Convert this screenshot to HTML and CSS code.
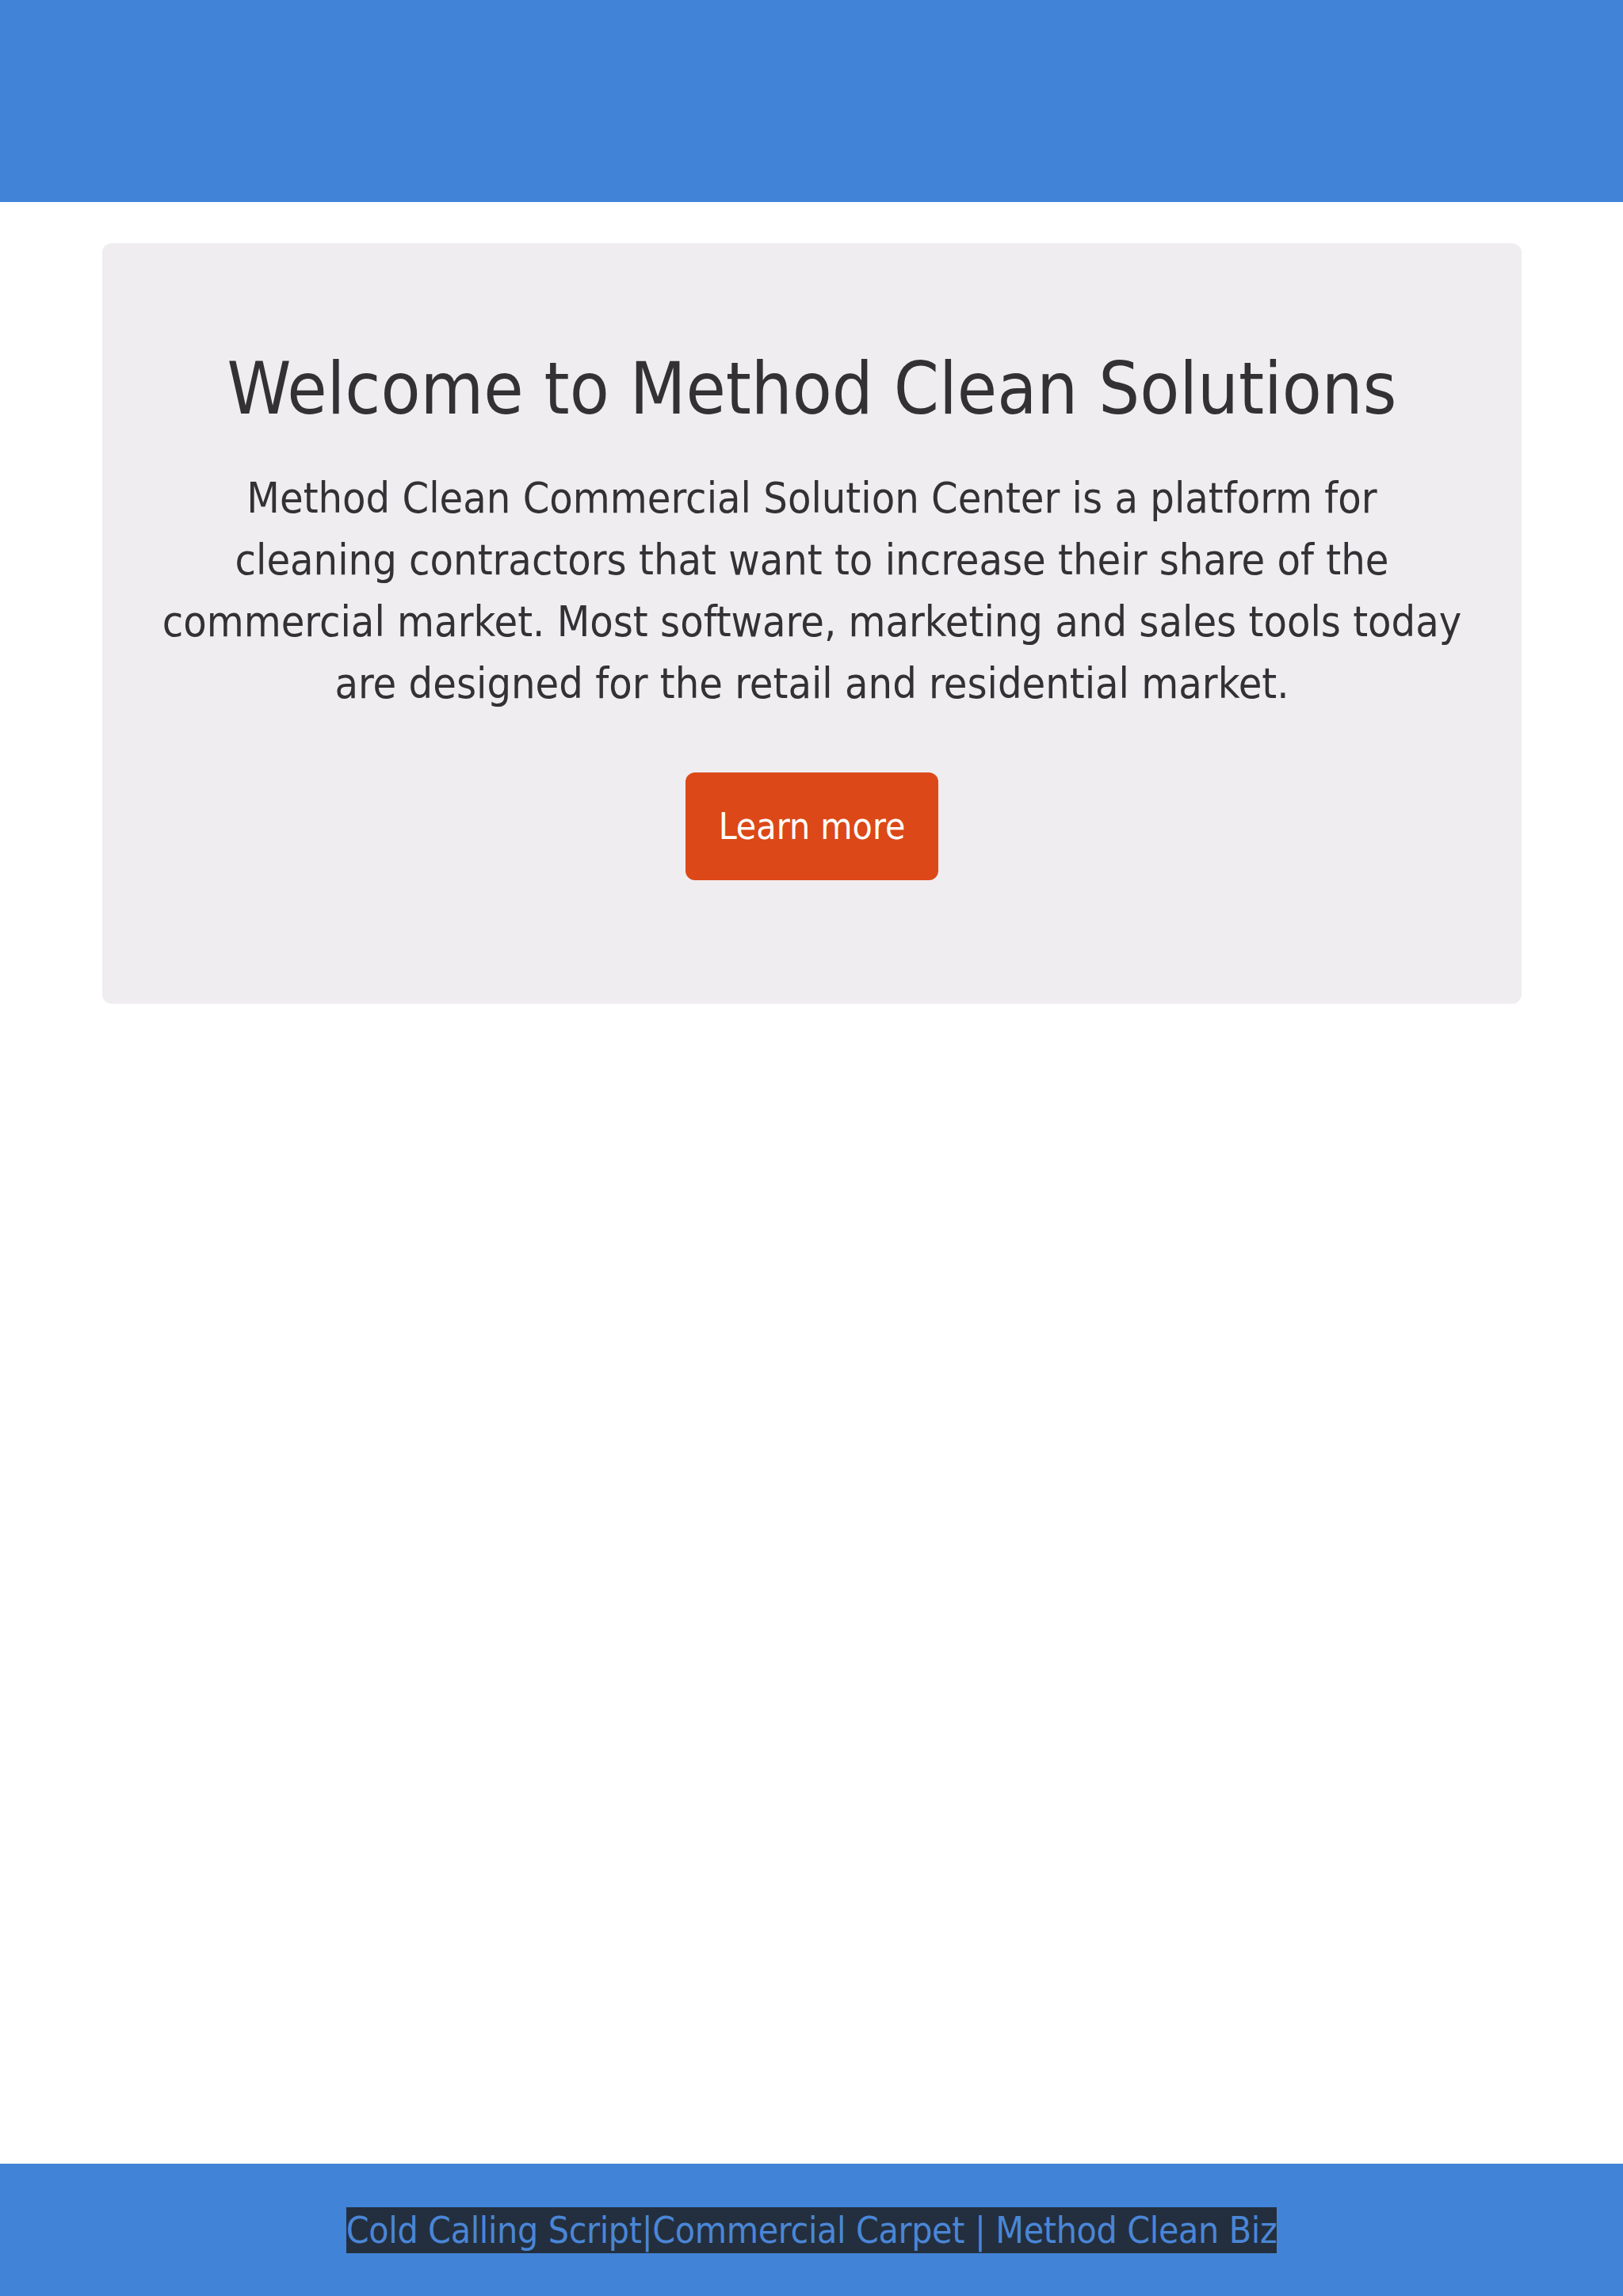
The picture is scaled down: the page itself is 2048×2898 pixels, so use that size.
FILE: index.html
```html
<!DOCTYPE html>
<html lang="en">
<head>
<meta charset="utf-8">
<title>Method Clean Solutions</title>
<link rel="stylesheet" href="styles.css">
</head>
<body>
<div class="page">
  <header class="topbar"></header>
  <main class="main">
    <section class="hero">
      <h1 class="hero-title">Welcome to Method Clean Solutions</h1>
      <p class="hero-text">Method Clean Commercial Solution Center is a platform for cleaning contractors that want to increase their share of the commercial market. Most software, marketing and sales tools today are designed for the retail and residential market.</p>
      <a class="btn" href="#">Learn more</a>
    </section>
  </main>
  <footer class="footer">
    <a class="footer-link" href="#">Cold Calling Script|Commercial Carpet | Method Clean Biz</a>
  </footer>
</div>
</body>
</html>
```

FILE: styles.css
```css
html, body {
  margin: 0;
  padding: 0;
}
body {
  font-family: "DejaVu Sans Condensed", "DejaVu Sans", sans-serif;
  color: #333134;
  background: #ffffff;
}
.page {
  min-height: 100vh;
  display: flex;
  flex-direction: column;
}
.topbar {
  height: 255px;
  background: #4183d7;
}
.main {
  flex: 1;
  padding: 52px 128px 0 129px;
}
.hero {
  background: #efedf0;
  border-radius: 12px;
  height: 960px;
  box-sizing: border-box;
  padding-top: 129px;
  text-align: center;
}
.hero-title {
  margin: 0;
  font-size: 91px;
  line-height: 110px;
  font-weight: normal;
}
.hero-text {
  margin: 44px auto 0;
  max-width: 1642px;
  font-size: 53.6px;
  line-height: 78px;
}
.btn {
  display: inline-block;
  margin-top: 73px;
  padding: 0 42px;
  height: 136px;
  line-height: 136px;
  background: #dc4817;
  color: #ffffff;
  font-size: 46px;
  border-radius: 12px;
  text-decoration: none;
}
.footer {
  height: 167px;
  background: #4183d7;
  display: flex;
  align-items: center;
  justify-content: center;
}
.footer-link {
  display: inline-block;
  background: #232f3e;
  color: #4a86d6;
  font-size: 46px;
  letter-spacing: -0.35px;
  line-height: 58px;
  text-decoration: none;
}
```
